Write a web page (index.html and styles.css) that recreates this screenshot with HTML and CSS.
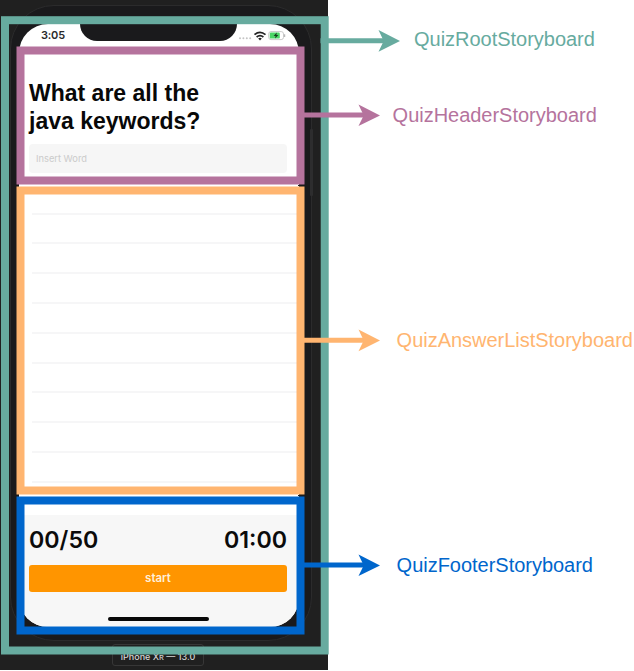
FILE: index.html
```
<!DOCTYPE html>
<html lang="en">
<head>
<meta charset="utf-8">
<title>Quiz storyboards</title>
<link rel="stylesheet" href="styles.css">
</head>
<body>
<main class="diagram">
  <section class="simulator">
    <div class="phone">
      <div class="screen">
        <div class="status">
          <span class="clock">3:05</span>
          <div class="notch"></div>
          <svg class="indicators" width="50" height="12" viewBox="0 0 50 12">
            <g fill="#c4c4c4"><circle cx="2" cy="8.3" r="1"/><circle cx="5.4" cy="8.3" r="1"/><circle cx="8.8" cy="8.3" r="1"/><circle cx="12.2" cy="8.3" r="1"/></g>
            <g fill="none" stroke="#222" stroke-width="1.7"><path d="M16.5 4.6Q22 0 27.5 4.6"/><path d="M18.6 7Q22 4.1 25.4 7"/></g>
            <path d="M20.2 8.5Q22 7 23.8 8.5L22 10.4Z" fill="#222"/>
            <rect x="30.7" y="1.6" width="14.8" height="8" rx="2.3" fill="#fff" stroke="#c4c4c4" stroke-width=".9"/>
            <rect x="31.8" y="2.6" width="10" height="6" rx="1.2" fill="#4bd566"/>
            <path d="M38.8 2.6L35.6 6H37.6L37 8.6L40.4 5.1H38.4Z" fill="#163c1e"/>
            <path d="M46.7 4.3V7" stroke="#aaa" stroke-width="1"/>
          </svg>
        </div>
        <header class="quiz-header">
          <h1>What are all the<br>java keywords?</h1>
          <div class="field">Insert Word</div>
        </header>
        <ul class="answers">
          <li></li><li></li><li></li><li></li><li></li><li></li><li></li><li></li><li></li><li></li>
        </ul>
        <footer class="quiz-footer">
          <div class="scores"><span>00/50</span><span>01:00</span></div>
          <div class="start">start</div>
          <div class="home"></div>
        </footer>
      </div>
      <div class="side-button"></div>
    </div>
    <div class="device">iPhone Xʀ — 13.0</div>
  </section>
  <section class="labels">
    <p class="label root">QuizRootStoryboard</p>
    <p class="label header">QuizHeaderStoryboard</p>
    <p class="label list">QuizAnswerListStoryboard</p>
    <p class="label footer">QuizFooterStoryboard</p>
  </section>
  <svg class="outlines" width="634" height="671" viewBox="0 0 634 671">
    <g fill="none" stroke="#1b1b1d" stroke-width="1"><path d="M298 185.5h7M298 495.5h7"/></g>
    <g stroke="#67ab9f" fill="none"><rect x="5" y="20.2" width="319.7" height="630.3" stroke-width="8"/><path d="M320.5 40.8H385" stroke-width="5"/></g>
    <path d="M400 41L378.5 51.7L383.7 41L378.5 30Z" fill="#67ab9f"/>
    <g stroke="#b5739d" fill="none"><rect x="20.5" y="50.5" width="280" height="130" stroke-width="8"/><path d="M304 115H365" stroke-width="5"/></g>
    <path d="M380 115.4L358.5 126.1L363.7 115.4L358.5 104.5Z" fill="#b5739d"/>
    <g stroke="#ffb570" fill="none"><rect x="20.5" y="190.5" width="280" height="300" stroke-width="8"/><path d="M304 340.3H365" stroke-width="5"/></g>
    <path d="M380 340.5L358.5 351.2L363.7 340.5L358.5 329.6Z" fill="#ffb570"/>
    <g stroke="#0066cc" fill="none"><rect x="20.5" y="500.5" width="280" height="130" stroke-width="8"/><path d="M304 565H365" stroke-width="5"/></g>
    <path d="M380 565.4L358.5 576.1L363.7 565.4L358.5 554.5Z" fill="#0066cc"/>
  </svg>
</main>
</body>
</html>
```
FILE: styles.css
```
* { box-sizing: border-box; margin: 0; padding: 0; }
body { background: #fff; font-family: Inter, "Liberation Sans", sans-serif; }
.diagram { position: relative; display: flex; width: 634px; height: 671px; overflow: hidden; }
.simulator {
  flex: none; width: 328px; height: 670px; padding: 5px 0 0 10px;
  background: #202020; overflow: hidden;
  display: flex; flex-direction: column;
}
.phone {
  position: relative; flex: none;
  width: 302px; height: 636px; padding: 18px 0 0 8px;
  background: #1a1a1c; border: 1px solid #2b2b2c; border-radius: 44px;
}
.side-button { position: absolute; right: -2px; top: 123px; width: 3px; height: 67px; background: #2d2d2e; border-radius: 1px; }
.screen {
  width: 280px; height: 603px; background: #fff; border-radius: 29px;
  overflow: hidden; display: flex; flex-direction: column;
}
.status { display: flex; height: 27px; flex: none; }
.clock { width: 61px; flex: none; padding: 5px 0 0 22px; font-size: 11px; line-height: 13px; font-weight: 600; color: #2b2b2b; letter-spacing: -.2px; }
.notch { width: 157px; flex: none; height: 17px; background: #1a1a1c; border-radius: 0 0 17px 17px; }
.indicators { margin: 6px 0 0 1px; flex: none; }
.quiz-header { height: 136px; flex: none; padding: 29px 12px 0 10px; }
h1 { font-family: "Liberation Sans", sans-serif; font-size: 23px; line-height: 27.6px; font-weight: 700; color: #080808; white-space: nowrap; }
.field {
  margin-top: 9px; height: 29px; padding: 0 7px; border-radius: 4px; background: #f6f6f6;
  color: #cbcbcb; font-size: 9.3px; line-height: 30px;
}
.answers { height: 328px; flex: none; list-style: none; padding: 0 2px 0 13px; }
.answers li { height: 29.8px; border-bottom: 2px solid #f6f6f7; }
.answers li:first-child { height: 27.6px; }
.quiz-footer { flex: 1; padding: 9px 12px 0 10px; background: #f7f7f7; }
.scores { display: flex; justify-content: space-between; font-size: 23.2px; line-height: 32px; font-weight: 600; color: #0b0b0b; }
.start {
  margin-top: 9px; height: 27px; border-radius: 3px; background: #ff9500;
  color: #fff0d9; text-align: center; font-size: 11.5px; line-height: 27px; font-weight: 600;
}
.home { width: 101px; height: 4px; margin: 25px auto 0; border-radius: 2px; background: #080808; }
.device {
  flex: none; width: 92px; height: 22px; margin: 3px 0 0 102px; border: 1px solid #373737; border-radius: 3px;
  color: #d6d6d6; font-size: 9px; line-height: 23px; font-weight: 500; text-align: center; white-space: nowrap;
}
.labels { flex: none; width: 306px; padding-top: 27px; }
.label { font-family: "Liberation Sans", sans-serif; font-size: 20px; line-height: 24px; white-space: nowrap; letter-spacing: -.02px; }
.root { margin-left: 86px; color: #67ab9f; }
.header { margin: 52px 0 0 64.6px; color: #b5739d; }
.list { margin: 201px 0 0 68.6px; color: #ffb570; }
.footer { margin: 201px 0 0 68.6px; color: #0066cc; }
.outlines { position: absolute; left: 0; top: 0; }
```
